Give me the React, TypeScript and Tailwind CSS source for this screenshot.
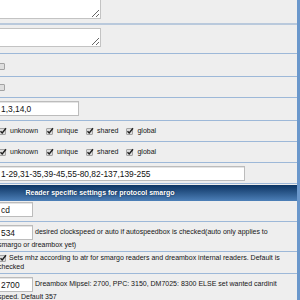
import React from 'react';

const Check = ({ checked = false, className = '' }: { checked?: boolean; className?: string }) => (
  <span
    className={`relative inline-block h-[7px] w-[7px] shrink-0 rounded-[1px] border border-[#a3a3a3] bg-[#dedede] align-middle ${className}`}
  >
    {checked && (
      <svg viewBox="0 0 8 8" className="absolute left-[-1px] top-[-2px] h-[8px] w-[8px]">
        <path d="M1.5 4.2 L3.2 6 L7 1.2" stroke="#1e1e1e" strokeWidth="1.4" fill="none" />
      </svg>
    )}
  </span>
);

const Field = ({ value, className = '' }: { value: string; className?: string }) => (
  <input
    readOnly
    value={value}
    className={`h-[15px] border border-[#bcbcbc] bg-white px-[2px] text-[8.4px] text-[#111] outline-none shadow-[inset_1px_1px_0_#e4e4e4] font-['Liberation_Sans',Arial,sans-serif] ${className}`}
  />
);

const Note = ({ className = '' }: { className?: string }) => (
  <textarea
    readOnly
    className={`block w-[103px] resize border border-[#c3c3c3] bg-white outline-none ${className}`}
  />
);

const flags = ['unknown', 'unique', 'shared', 'global'];

const row = 'border-b border-[#9db8d8] pr-[5px]';

export default function App() {
  return (
    <div className="h-[300px] w-[300px] overflow-hidden border-r-[3px] border-[#6a97cb] bg-[#eeeeee] text-[7px] text-[#151515] font-['Liberation_Sans',Arial,sans-serif]">
      <div className="-ml-[2px] -mt-[4px]">
        <div className="h-[28px] border-b-2 border-[#b9c9dc]">
          <Note className="mt-[1px] h-[22px]" />
        </div>
        <div className={`h-[26px] ${row}`}>
          <Note className="mt-[3px] h-[19px]" />
        </div>
        <div className={`h-[23px] pt-[7px] ${row}`}>
          <Check className="block" />
        </div>
        <div className={`h-[21px] pt-[5px] ${row}`}>
          <Check className="block" />
        </div>
        <div className={`h-[23px] pt-[3px] ${row}`}>
          <Field value="1,3,14,0" className="w-[81px]" />
        </div>
        {[0, 1].map((i) => (
          <div key={i} className={`flex h-[21px] items-center ${row}`}>
            {flags.map((f) => (
              <span key={f} className="mr-[7px] flex items-center">
                <Check checked className="ml-[1px]" />
                <span className="ml-[4px]">{f}</span>
              </span>
            ))}
          </div>
        ))}
        <div className={`h-[21px] pt-[3px] ${row}`}>
          <Field value="1-29,31-35,39-45,55-80,82-137,139-255" className="w-[247px]" />
        </div>
        <div className="-ml-[95px] mt-[1px] flex h-[16px] items-center justify-center bg-gradient-to-b from-[#0c3563] to-[#4d80b8] text-[7px] font-bold text-white [text-shadow:0_0_2px_#0a2342]">
          Reader specific settings for protocol smargo
        </div>
        <div className={`h-[21px] pt-[1px] ${row}`}>
          <Field value="cd" className="w-[35px]" />
        </div>
        <div className={`h-[30px] pt-[3px] leading-[10px] ${row}`}>
          <Field value="534" className="mr-[2px] w-[35px] align-middle" />
          desired clockspeed or auto if autospeedbox is checked(auto only applies to smargo or dreambox yet)
        </div>
        <div className={`h-[22px] pt-[1px] leading-[9px] ${row}`}>
          <Check checked className="ml-[1px] mr-[3px] align-[-1px]" />
          Sets mhz according to atr for smargo readers and dreambox internal readers. Default is checked
        </div>
        <div className="pt-[3px] leading-[9px] pr-[5px]">
          <Field value="2700" className="mr-[2px] w-[35px] align-middle" />
          Dreambox Mipsel: 2700, PPC: 3150, DM7025: 8300 ELSE set wanted cardinit speed. Default 357
        </div>
      </div>
    </div>
  );
}
